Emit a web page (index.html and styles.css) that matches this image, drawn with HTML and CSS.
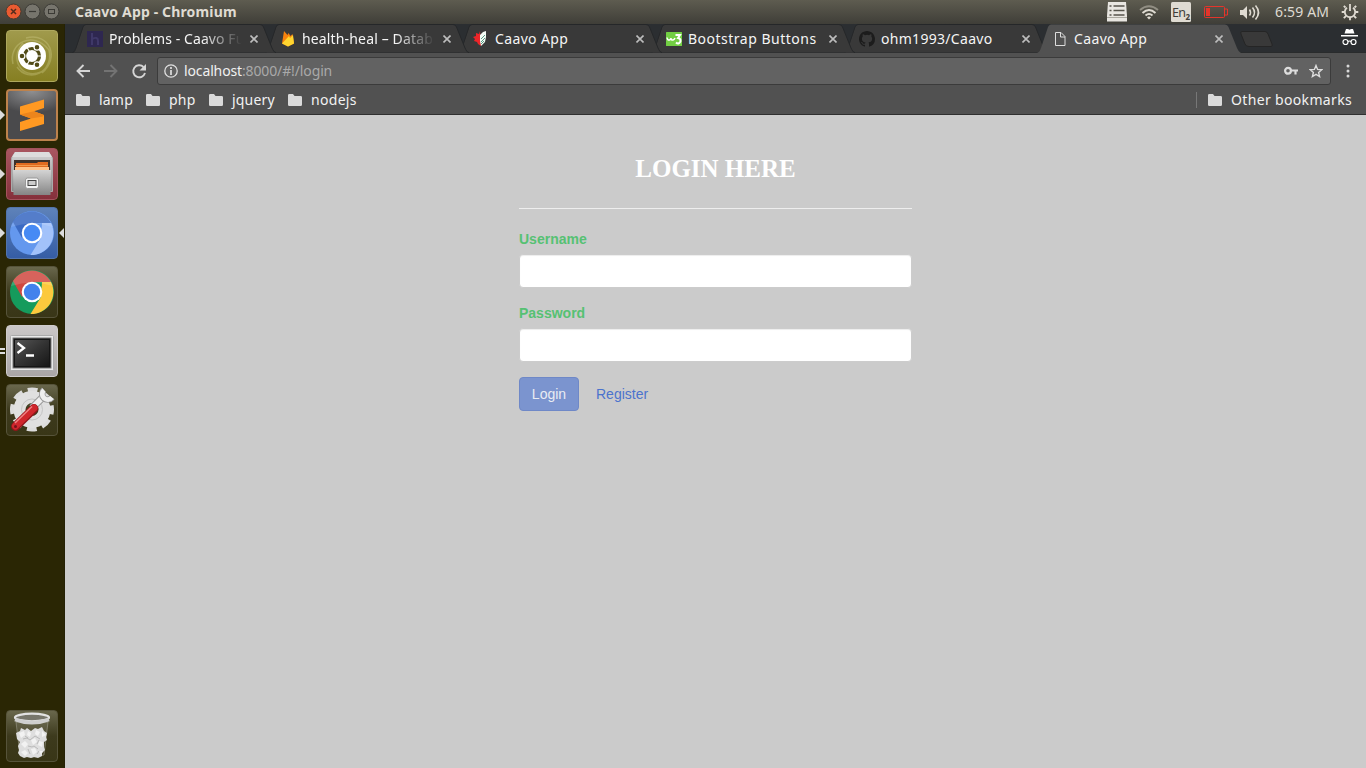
FILE: index.html
```html
<!DOCTYPE html>
<html lang="en">
<head>
<meta charset="utf-8">
<title>Caavo App</title>
<link rel="stylesheet" href="styles.css">
</head>
<body>
<svg class="defs" width="0" height="0">
  <defs>
    <linearGradient id="silver" x1="0" y1="0" x2="0" y2="1"><stop offset="0" stop-color="#d4d4d4"/><stop offset="1" stop-color="#858585"/></linearGradient>
    <linearGradient id="screen" x1="0" y1="0" x2="1" y2="1"><stop offset="0" stop-color="#555"/><stop offset=".5" stop-color="#333"/><stop offset="1" stop-color="#171717"/></linearGradient>
    <symbol id="folder" viewBox="0 0 14 12"><path fill="#dadada" d="M0 1.3Q0 0 1.3 0H5l1.5 2h6.200Q14 2 14 3.300V10.700Q14 12 12.700 12H1.300Q0 12 0 10.700Z"/></symbol>
    <symbol id="close" viewBox="0 0 8 8"><path d="M.5.5l7 7m0-7l-7 7" stroke="#bdbdbd" stroke-width="1.600"/></symbol>
    <symbol id="tabshape" viewBox="0 0 204 29"><path d="M.5 28.500C3 28 3 26 4 24L11 3Q12 .5 14 .5H188Q190.500.5 191.500 3L200 24C201 26 202 28.500 204 28.500" fill="#393939" stroke="#252729"/></symbol>
  </defs>
</svg>
<div class="desktop">
  <header class="menubar">
    <svg class="winbuttons" width="56" height="24" viewBox="0 0 56 24">
      <circle cx="9.500" cy="11.500" r="7.500" fill="#ea5b31" stroke="#4b3a2f"/><path d="M7 9l5 5m0-5l-5 5" stroke="#532c1c" stroke-width="1.500"/>
      <circle cx="28.500" cy="11.500" r="7.500" fill="#77756d" stroke="#3c3b36"/><path d="M25 11.500h7" stroke="#3b3a35" stroke-width="1.200"/>
      <circle cx="47.500" cy="11.500" r="7.500" fill="#77756d" stroke="#3c3b36"/><rect x="44.500" y="9.500" width="6" height="4" fill="none" stroke="#3b3a35"/>
    </svg>
    <strong class="wintitle">Caavo App - Chromium</strong>
    <svg class="tray" width="160" height="24" viewBox="1106 0 160 24">
      <path fill="#e8e6e1" d="M1108 2h18l1 14v5.500h-20v-5.500Z"/><path stroke="#55534b" stroke-width="1.500" d="M1109.500 6h2m2 0h11M1109.500 10.500h2m2 0h11M1109.500 15h2m2 0h11"/><path stroke="#aaa89f" d="M1107 17.500h20"/>
      <g fill="none" stroke-width="1.900"><path stroke="#918e83" d="M1140 10Q1149 2.500 1158 10"/><path stroke="#dfdbd2" d="M1142.500 13Q1149 7 1155.500 13M1145.500 15.500Q1149 12.500 1152.500 15.500"/></g><path fill="#dfdbd2" d="M1147 17.500Q1149 15.500 1151 17.500L1149 19.500Z"/>
      <rect x="1171" y="2" width="20" height="20" rx="1.500" fill="#dfdbd2"/><text class="lang" x="1172" y="17">En<tspan class="lang-sub" dy="2.500">2</tspan></text>
      <rect x="1204.500" y="6.500" width="20" height="11" rx="1" fill="none" stroke="#e5352b"/><path d="M1225 9h2.500v6H1225" fill="none" stroke="#e5352b"/><rect x="1206" y="8" width="4" height="8" fill="#e5352b"/>
      <path fill="#dfdbd2" d="M1240 10h3l4-4v13l-4-4h-3Z"/><g fill="none" stroke="#dfdbd2" stroke-width="1.600"><path d="M1249.500 9.500q2 3 0 6M1252.500 7.500q4 5 0 10M1255.500 5.500q6 7 0 14"/></g>
    </svg>
    <span class="clock">6:59 AM</span>
    <svg class="power" width="18" height="18" viewBox="0 0 18 18"><g fill="none" stroke="#dfdbd2"><path stroke-width="1.800" d="M6 4.800a5.200 5.200 0 1 0 6 0"/><path stroke-width="1.800" d="M9 1v7M4.500 4.500L2.800 2.800M13.500 4.500l1.700-1.700M3.500 9H.7M14.500 9h2.800M5 13l-2.200 2.200M13 13l2.200 2.200M9 14.500v2.800"/></g></svg>
  </header>

  <nav class="launcher">
    <div class="tile ubuntu"><svg viewBox="0 0 52 52">
      <g fill="none" stroke="#d5d18f" stroke-opacity=".35" stroke-width="1.500"><path d="M7 34C2 13 27 0 43 20M20 8C44 2 54 28 36 43M43 20C48 42 23 54 11 37M35 42C15 50 3 28 17 13"/></g>
      <circle cx="26" cy="26" r="14" fill="#fff"/><circle cx="26" cy="26" r="7.500" fill="none" stroke="#514b17" stroke-width="3.200"/><g fill="#514b17" stroke="#fff" stroke-width="1.200"><circle cx="16" cy="26" r="2.900"/><circle cx="31" cy="17.300" r="2.900"/><circle cx="31" cy="34.700" r="2.900"/></g><path stroke="#fff" stroke-width="1.200" d="M30 26h6M24 22.500l-3.500-6M24 29.500l-3.500 6"/></svg></div>
    <div class="tile sublime"><i class="pip left"></i><svg viewBox="0 0 52 52"><path fill="#ff9922" d="M14 17.500L38 10.500V19L28 22.300L38 26V35L14 42V33L25 29.500L14 25.500Z"/><path fill="#ec851c" d="M14 25.500L28 22.300L38 26L37 27.500L25 29.500Z"/></svg></div>
    <div class="tile files"><i class="pip left"></i><svg viewBox="0 0 52 52"><path fill="url(#silver)" stroke="#aaa" d="M5.500 10L9 4.500H43L46.500 10V43.500H5.500Z"/><path fill="#ddd" d="M6 9L9 4H43L46 9Z"/><rect x="8" y="12" width="36" height="10" fill="#3d322a"/><path fill="#e06b20" d="M10 15H31L32 14H42V22H10Z"/><path fill="#ffc288" d="M9 19H43V22H9Z"/><path stroke="#f29b4d" d="M9 17.500H42"/><path fill="url(#silver)" d="M7 22H45L44.500 47H7.500Z"/><rect x="19.500" y="30" width="13" height="10.500" rx="2" fill="#f4f4f4" stroke="#999"/><rect x="22" y="32.500" width="8" height="5" fill="#ccc" stroke="#444"/></svg></div>
    <div class="tile chromium"><i class="pip left"></i><i class="pip right"></i><svg viewBox="0 0 52 52"><circle cx="26" cy="26" r="22" fill="#6498ee"/><path fill="#3b6ac3" d="M7 15A22 22 0 0 1 45 16H26L16 31Z"/><path fill="#a2c2fa" d="M45 16A22 22 0 0 1 24.500 48L35 31L36 16Z"/><path fill="#fff" fill-opacity=".13" d="M5 20A22 22 0 0 1 47 20Q26 13 5 20Z"/><circle cx="26" cy="26" r="10.300" fill="#fff"/><circle cx="26" cy="26" r="8.200" fill="#478af4"/></svg></div>
    <div class="tile plain"><svg viewBox="0 0 52 52"><circle cx="26" cy="26" r="22" fill="#159b5c"/><path fill="#cf4840" d="M7 15A22 22 0 0 1 45 16H26L16 31Z"/><path fill="#fcc93d" d="M45 16A22 22 0 0 1 24.500 48L35 31L36 16Z"/><path fill="#fff" fill-opacity=".15" d="M5 20A22 22 0 0 1 47 20Q26 13 5 20Z"/><circle cx="26" cy="26" r="10.300" fill="#fff"/><circle cx="26" cy="26" r="8.200" fill="#4282ec"/></svg></div>
    <div class="tile terminal"><i class="dash d1"></i><i class="dash d2"></i><svg viewBox="0 0 52 52"><rect x="4.500" y="10.500" width="43" height="35" rx="1" fill="#e9e9e9" stroke="#aaa"/><rect x="7" y="13" width="38" height="30" fill="#151515" stroke="#777"/><rect x="9" y="15" width="34" height="26" fill="url(#screen)"/><g fill="none" stroke="#fff" stroke-width="2.300"><path d="M11.500 18L18 23L11.500 28M20 30.500H28"/></g></svg></div>
    <div class="tile plain"><svg viewBox="0 0 52 52"><circle cx="26" cy="25.500" r="19" fill="none" stroke="#dcdcdc" stroke-width="6" stroke-dasharray="9.500 5.423" stroke-dashoffset="4.750"/><circle cx="26" cy="25.500" r="12.500" fill="none" stroke="#e0e0e0" stroke-width="12"/><circle cx="26" cy="25.500" r="10.500" fill="none" stroke="#c4c4c4"/><path d="M26 24L37 13" stroke="#999" stroke-width="7.500"/><path d="M26 24L37 13" stroke="#eee" stroke-width="5.500"/><path d="M38 6A5.500 5.500 0 1 0 46 13.500" fill="none" stroke="#999" stroke-width="6.500"/><path d="M38 6A5.500 5.500 0 1 0 46 13.500" fill="none" stroke="#eee" stroke-width="4.800"/><path d="M9.500 42.500L28 24.500" stroke="#91151b" stroke-width="8.800" stroke-linecap="round"/><path d="M9.500 42L28 24" stroke="#cf262c" stroke-width="7" stroke-linecap="round"/><path d="M9 39L26 22.500" stroke="#ee8585" stroke-width="1.400"/><circle cx="9.500" cy="42.500" r="1.500" fill="#74141a"/></svg></div>
    <div class="tile plain trash"><svg viewBox="0 0 52 52"><path fill="#f6f6f6" fill-opacity=".1" stroke="#aaa89b" stroke-opacity=".5" d="M10 12H42L38 45Q26 49 14 45Z"/><path fill="#dedede" d="M10 23l4-2 1-3 4 2 2-2 4 3 4-3 3 1 4-2 2 4 3 2-1 4 1 3-3 2 0 5 1 3-3 3 0 3-4 2-4-1-3 1-4-1-3 1-4-2-2-3 1-3-1-4 2-4-3-3Z"/><path fill="#f2f2f2" d="M13 23l5-2 1 4-4 3ZM22 21l3 2-1 4-3-2ZM30 20l4 2-2 4-3-2ZM36 21l4 4-4 2ZM15 34l4-3 3 3-3 4ZM25 30l4-2 2 4-4 3ZM33 31l4 1-1 5-4-2ZM15 42l4-2 3 3-3 3ZM25 39l4-1 2 4-4 3ZM33 41l4 0-2 4Z"/><path fill="none" stroke="#aaa" stroke-opacity=".7" d="M17 29l4-1 3 2 5-4 5 3M22 36l4 1 2-1 4 3M19 26l3 2M31 34l2-4M22 39l2 5M31 44l2-3"/><ellipse cx="26" cy="7.500" rx="17" ry="3.800" fill="#77766b" stroke="#e2e2e2" stroke-width="2.200"/><path fill="none" stroke="#cfcfcf" stroke-width="3.500" d="M9 9.500Q26 16 43 9.500"/></svg></div>
  </nav>

  <main class="browser">
    <div class="tabstrip">
      <div class="tab"><svg class="shape"><use href="#tabshape"/></svg><svg class="fav" viewBox="0 0 16 16"><rect width="16" height="16" fill="#2e2750"/><path d="M5 2v12M5 8q6-3 6 2v4" fill="none" stroke="#3f3868" stroke-width="2"/></svg><span class="label fade t1">Problems - Caavo Fu</span><svg class="x"><use href="#close"/></svg></div>
      <div class="tab"><svg class="shape"><use href="#tabshape"/></svg><svg class="fav" viewBox="0 0 16 16"><path fill="#f6820d" d="M2 12.500L4 0l3.500 4 1-2 2 3 2-2 1.500 9.500-6 3Z"/><path fill="#ffd52f" d="M2 12.500L9 5l1 2 3-3 1 8.500-6 3Z"/></svg><span class="label fade t2">health-heal – Datab</span><svg class="x"><use href="#close"/></svg></div>
      <div class="tab"><svg class="shape"><use href="#tabshape"/></svg><svg class="fav" viewBox="0 0 16 16"><path fill="#ed2529" d="M7 0L8 15 5 13 4 11 1 10 2 8 0 6 3 5 3 2 6 3Z"/><path fill="#f4fbf6" d="M7 4l3-3 3-1v6l-1 5-4 4-1-5Z"/><path fill="none" stroke="#2c8064" stroke-width=".8" d="M12 4l-4 4m4-1l-4 4m3-1l-3 3"/></svg><span class="label t3">Caavo App</span><svg class="x"><use href="#close"/></svg></div>
      <div class="tab"><svg class="shape"><use href="#tabshape"/></svg><svg class="fav" viewBox="0 0 16 16"><rect y="1" width="16" height="14" rx=".5" fill="#72cf43"/><path fill="none" stroke="#fff" stroke-width="1.500" d="M1 6.500q.5 3 2.500 2.500q1.500-.5 1.500-2q0 2.500 2 2q1.500-.5 2-2"/><path fill="none" stroke="#fff" stroke-width="1.900" d="M9.500 4H14L12 7Q15 7.500 14.500 10.500Q12.500 14 10 11.500"/></svg><span class="label t4">Bootstrap Buttons</span><svg class="x"><use href="#close"/></svg></div>
      <div class="tab"><svg class="shape"><use href="#tabshape"/></svg><svg class="fav" viewBox="0 0 16 16"><path fill="#1c1c1c" d="M8 0C3.580 0 0 3.580 0 8c0 3.540 2.290 6.530 5.470 7.590.4.070.55-.17.55-.38 0-.19-.01-.82-.01-1.490-2.010.37-2.530-.49-2.690-.94-.09-.23-.48-.94-.82-1.130-.28-.15-.68-.52-.01-.53.63-.01 1.080.58 1.230.82.72 1.210 1.870.87 2.330.66.07-.52.28-.87.51-1.070-1.780-.2-3.640-.89-3.640-3.950 0-.87.31-1.590.82-2.150-.08-.2-.36-1.020.08-2.120 0 0 .67-.21 2.200.82a7.600 7.600 0 0 1 4 0c1.530-1.040 2.200-.82 2.200-.82.44 1.100.16 1.920.08 2.120.51.56.82 1.270.82 2.150 0 3.070-1.870 3.750-3.650 3.950.29.25.54.73.54 1.480 0 1.070-.01 1.930-.01 2.200 0 .21.15.46.55.38A8 8 0 0 0 16 8c0-4.420-3.580-8-8-8Z"/></svg><span class="label t5">ohm1993/Caavo</span><svg class="x"><use href="#close"/></svg></div>
      <div class="tab active"><svg class="shape" viewBox="0 0 204 29"><path d="M0 29C3 28 3 26 4 24L11 3Q12 .5 14 .5H188Q190.500.5 191.500 3L200 24C201 26 202 28 204 29Z" fill="#515151"/></svg><svg class="fav" viewBox="0 0 16 16"><path fill="none" stroke="#ddd" d="M3.500 1.500H9l4 4v9H3.500ZM8.500 1.500V6H13"/></svg><span class="label t3">Caavo App</span><svg class="x"><use href="#close"/></svg></div>
      <svg class="newtab" width="36" height="18" viewBox="0 0 36 18"><path fill="#393939" stroke="#252525" d="M3 1.500H26Q28 1.500 29 4L33 14Q34 16.500 32 16.500H10Q7 16.500 6 14L2 4Q1 1.500 3 1.500Z"/></svg>
      <svg class="incognito" width="17" height="17" viewBox="0 0 17 17"><path fill="#fff" d="M5 0h2l1.500.7L10 0h2l1.500 4.500h-10ZM0 6h17v1.500H0Z"/><g fill="none" stroke="#fff" stroke-width="1.200"><circle cx="4.500" cy="13" r="2.500"/><circle cx="12.500" cy="13" r="2.500"/><path d="M7 12.500q1.500-1 3 0"/></g></svg>
    </div>
    <div class="toolbar">
      <svg class="nav" width="74" height="18" viewBox="0 0 74 18"><g fill="none" stroke-width="1.900"><path stroke="#d5d5d5" d="M16 9H3.500m6-6L3.500 9L9.500 15"/><path stroke="#737373" d="M30 9h12.500m-6-6L42.500 9L36.500 15"/><path stroke="#d5d5d5" d="M69.500 5A6 6 0 1 0 71 11"/></g><path fill="#d5d5d5" d="M72 2V8.500H65.500Z"/></svg>
      <div class="omnibox">
        <svg width="14" height="14" viewBox="0 0 14 14"><circle cx="7" cy="7" r="6.200" fill="none" stroke="#e0e0e0" stroke-width="1.300"/><path stroke="#e0e0e0" stroke-width="1.700" d="M7 6v5M7 3v2"/></svg>
        <span class="url"><b>localhost</b>:8000/#!/login</span>
        <svg class="key" width="14" height="10" viewBox="0 0 14 10"><path fill="none" stroke="#ddd" stroke-width="2.200" d="M7 4.500H14M11.500 5v3.500"/><circle cx="4" cy="4.800" r="2.900" fill="none" stroke="#ddd" stroke-width="2.200"/></svg>
        <svg width="14" height="14" viewBox="0 0 14 14"><path fill="none" stroke="#ddd" stroke-width="1.400" d="M7 1.500l1.600 3.900 4.200.3-3.200 2.700 1 4.100L7 10.300l-3.600 2.200 1-4.100L1.200 5.700l4.200-.3Z"/></svg>
      </div>
      <svg class="dots" width="4" height="14" viewBox="0 0 4 14"><g fill="#d8d8d8"><circle cx="2" cy="2" r="1.500"/><circle cx="2" cy="7" r="1.500"/><circle cx="2" cy="12" r="1.500"/></g></svg>
    </div>
    <div class="bookmarks">
      <div class="bm b1"><svg><use href="#folder"/></svg><span>lamp</span></div>
      <div class="bm b2"><svg><use href="#folder"/></svg><span>php</span></div>
      <div class="bm b3"><svg><use href="#folder"/></svg><span>jquery</span></div>
      <div class="bm b4"><svg><use href="#folder"/></svg><span>nodejs</span></div>
      <div class="bm other"><svg><use href="#folder"/></svg><span>Other bookmarks</span></div>
    </div>
    <section class="page">
      <form class="login">
        <h1>LOGIN HERE</h1>
        <hr>
        <label for="user">Username</label>
        <input id="user" type="text">
        <label for="pass">Password</label>
        <input id="pass" type="password">
        <div class="actions"><button type="button" class="submit">Login</button><a>Register</a></div>
      </form>
    </section>
  </main>
</div>
</body>
</html>
```
FILE: styles.css
```css
* { box-sizing: border-box; }
body { margin: 0; overflow: hidden; font-family: "Noto Sans", "Open Sans", sans-serif; }
svg { display: block; flex: none; }
.defs { position: absolute; }
.desktop { display: grid; grid-template: 24px 744px / 65px 1301px; width: 1366px; height: 768px; }

.menubar { grid-column: 1 / 3; display: flex; align-items: center; padding: 0 7px 0 4px; background: linear-gradient(#5e5c50, #3f3e38); color: #dfdbd2; }
.wintitle { margin-left: 15px; font-size: 14px; line-height: 24px; letter-spacing: .15px; }
.tray { margin-left: auto; }
.lang { font-size: 12.500px; letter-spacing: -.6px; fill: #3f3e38; }
.lang-sub { font-size: 8px; font-weight: bold; }
.clock { width: 55px; margin-left: 9px; font-size: 14px; line-height: 24px; letter-spacing: .15px; white-space: nowrap; }
.power { margin-left: 11px; }

.launcher { display: flex; flex-direction: column; gap: 7px; padding: 6px 0 6px 6px; background: #2a2604; border-right: 1px solid #242105; }
.tile { position: relative; width: 52px; height: 52px; border-radius: 4px; border: 1px solid rgba(255,255,255,.3); }
.tile > svg { width: 52px; height: 52px; margin: -1px; }
.ubuntu { background: linear-gradient(#a09a4c, #867f22); border-color: #aea85d; }
.sublime { background: radial-gradient(ellipse 40px 22px at 50% 0, #909092, #4a4a4c); border: 2px solid #bd824c; }
.sublime > svg { margin: -2px; }
.files { background: linear-gradient(#a95660, #85303b); border-color: #a3525c; }
.chromium { background: linear-gradient(#5e82b9, #355da5); border-color: #5374aa; }
.plain { background: linear-gradient(#69674c, #3d3a1d 50%, #393617); border-color: #56533a; }
.terminal { background: linear-gradient(#cbc8c8, #aaa6a6); border-color: #cfcccc; }
.trash { margin-top: auto; }
.pip { position: absolute; top: 20px; border: 5px solid transparent; }
.pip.left { left: -7px; border-left-color: #dcdcdc; border-right: 0; }
.pip.right { left: 52px; border-right-color: #dcdcdc; border-left: 0; }
.sublime .pip { left: -8px; top: 19px; }
.dash { position: absolute; left: -7px; width: 5px; height: 2px; background: #ddd; }
.d1 { top: 22px; }
.d2 { top: 26px; }

.browser { display: flex; flex-direction: column; min-width: 0; }
.tabstrip { display: flex; height: 29px; padding-left: 7px; background: #2b2e31; border-bottom: 1px solid #292b2c; }
.tab { position: relative; display: flex; align-items: center; width: 204px; height: 29px; flex: none; margin-right: -11px; padding-left: 15px; z-index: 1; }
.tab:nth-child(1) { z-index: 6; }
.tab:nth-child(2) { z-index: 5; }
.tab:nth-child(3) { z-index: 4; }
.tab:nth-child(4) { z-index: 3; }
.tab:nth-child(5) { z-index: 2; }
.tab.active { z-index: 7; }
.shape { position: absolute; inset: 0; width: 204px; height: 29px; }
.fav { position: relative; width: 16px; height: 16px; }
.label { position: relative; width: 133px; margin-left: 6px; overflow: hidden; white-space: nowrap; font-size: 14px; line-height: 28px; color: #f5f5f5; }
.t1 { letter-spacing: .08px; }
.t2 { letter-spacing: .15px; }
.t3 { letter-spacing: .36px; }
.t4 { letter-spacing: .5px; }
.t5 { letter-spacing: .3px; }
.fade { -webkit-mask-image: linear-gradient(90deg, #000 70%, transparent); mask-image: linear-gradient(90deg, #000 70%, transparent); }
.x { position: relative; width: 8px; height: 8px; margin-left: 8px; }
.newtab { margin: 6px 0 0 9px; }
.incognito { margin: 5px 8px 0 auto; }

.toolbar { display: flex; align-items: center; height: 34px; padding: 2px 16px 0 9px; background: #515151; }
.nav { margin-right: 9px; }
.omnibox { display: flex; align-items: center; width: 1174px; height: 28px; padding: 0 7px 0 6px; background: #626262; border: 1px solid #3b3b3b; border-radius: 3px; }
.url { margin-left: 6px; font-size: 14px; line-height: 26px; letter-spacing: -.13px; color: #a9a9a9; }
.url b { font-weight: 400; color: #f0f0f0; }
.key { margin: 0 11px 0 auto; }
.dots { margin-left: auto; margin-right: 0; }
.bookmarks { display: flex; align-items: center; height: 28px; padding: 0 14px 2px 11px; background: #515151; border-bottom: 1px solid #303030; }
.bm { display: flex; align-items: center; font-size: 14px; line-height: 24px; letter-spacing: .2px; color: #f2f2f2; white-space: nowrap; }
.bm svg { width: 14px; height: 12px; margin-right: 9px; }
.b1 { width: 70px; }
.b2 { width: 63px; }
.b3 { width: 79px; }
.b4 { letter-spacing: .3px; }
.other { margin-left: auto; letter-spacing: .34px; }
.other::before { content: ""; width: 1px; height: 16px; margin-right: 11px; background: #777; }

.page { flex: 1; background: #cbcbcb; font-family: "Liberation Sans", sans-serif; font-size: 14px; line-height: 20px; }
.login { width: 393px; margin-left: 454px; padding-top: 40px; }
h1 { margin: 0; font: bold 25px/27px "Liberation Serif", serif; color: #fff; text-align: center; }
hr { height: 1px; margin: 26px 0 20px; border: 0; background: #eee; }
label { display: block; margin-bottom: 5px; font-weight: bold; color: #56c173; }
input { display: block; width: 393px; height: 34px; margin: 0 0 15px; border: 1px solid #ccc; border-radius: 4px; background: #fff; box-shadow: inset 0 1px 1px rgba(0,0,0,.075); }
.actions { display: flex; align-items: center; }
.submit { width: 60px; height: 34px; padding: 0; border: 1px solid #6f88c7; border-radius: 4px; background: #7b94cf; color: #e9ecf3; font: 14px "Liberation Sans", sans-serif; }
.actions a { margin-left: 17px; color: #4b73cd; }
```
